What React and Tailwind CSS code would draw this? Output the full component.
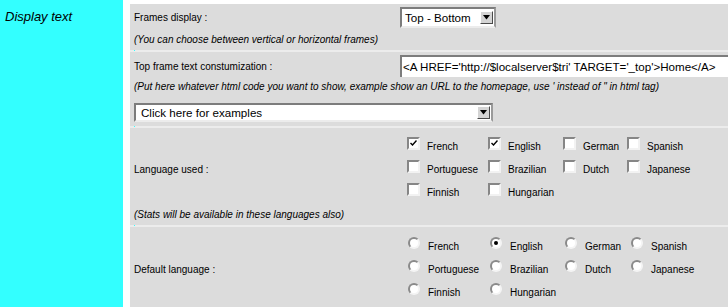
import React from 'react';

const languages = [
  ['French', 'English', 'German', 'Spanish'],
  ['Portuguese', 'Brazilian', 'Dutch', 'Japanese'],
  ['Finnish', 'Hungarian'],
];

const used = ['French', 'English'];

const Arrow = () => (
  <span className="flex h-[13px] w-[13px] shrink-0 items-center justify-center border border-t-white border-l-white border-r-[#4a4a4a] border-b-[#4a4a4a] bg-[#d4d4d4]">
    <svg width="7" height="5" viewBox="0 0 7 5">
      <path d="M0 0 H7 L3.5 4.5 Z" fill="#000" />
    </svg>
  </span>
);

const Separator = () => (
  <div className="h-[2px] bg-[#ececec] pl-[4px]">
    <div className="h-[1px] w-[1px] bg-[#33ffff]" />
  </div>
);

const Checkbox = ({ checked }) => (
  <span className="mb-[7px] flex h-[13px] w-[13px] shrink-0 items-start justify-start border-2 border-t-[#868686] border-l-[#868686] border-r-[#f2f2f2] border-b-[#f2f2f2] bg-white pl-[1px] pt-[1px]">
    {checked && (
      <svg width="7" height="6" viewBox="0 0 7 6">
        <path d="M0.5 3 L2.5 5 L6.5 0.5" stroke="#000" strokeWidth="1.4" fill="none" />
      </svg>
    )}
  </span>
);

const Radio = ({ checked }) => (
  <span className="mb-[7px] flex h-[12px] w-[12px] shrink-0 items-center justify-center rounded-full border-2 border-t-[#8a8a8a] border-l-[#8a8a8a] border-r-[#f4f4f4] border-b-[#f4f4f4] bg-white">
    {checked && <span className="h-[4px] w-[4px] rounded-full bg-black" />}
  </span>
);

const App = () => {
  return (
    <div className="flex h-[307px] overflow-hidden bg-white font-['Liberation_Sans',Arial,sans-serif] text-black">
      <div className="w-[123px] shrink-0 bg-[#33ffff] pl-[5px] pt-[9px]">
        <p className="text-[13px] italic leading-[16px]">Display text</p>
      </div>

      <div className="ml-[7px] mt-[4px] min-w-0 flex-1 bg-[#dcdcdc] text-[10px]">
        {/* frames display */}
        <section className="pl-[4px] pt-[3px] pb-[4px]">
          <div className="flex h-[21px] items-center">
            <span className="w-[266px] shrink-0">Frames display :</span>
            <div className="flex h-[21px] w-[96px] items-center justify-between border-2 border-t-[#7c7c7c] border-l-[#7c7c7c] border-r-[#9a9a9a] border-b-[#ececec] bg-white pl-[3px] pr-[1px] text-[11.6px]">
              <span>Top - Bottom</span>
              <Arrow />
            </div>
          </div>
          <p className="mt-[6px] italic leading-[12px]">(You can choose between vertical or horizontal frames)</p>
        </section>

        <Separator />

        {/* top frame text */}
        <section className="pl-[4px] pt-[3px] pb-[4px]">
          <div className="flex h-[22px] items-center">
            <span className="w-[266px] shrink-0">Top frame text constumization :</span>
            <div className="flex h-[22px] min-w-0 flex-1 items-center overflow-hidden whitespace-nowrap border-t-2 border-l-2 border-t-[#7c7c7c] border-l-[#7c7c7c] bg-white pl-[1px] text-[11.6px]">
              &lt;A HREF='http://$localserver$tri' TARGET='_top'&gt;Home&lt;/A&gt;
            </div>
          </div>
          <p className="mt-[4px] italic leading-[12px]">
            (Put here whatever html code you want to show, example show an URL to the homepage, use ' instead of " in html tag)
          </p>
          <div className="mt-[10px] flex h-[19px] w-[359px] items-center justify-between border-2 border-t-[#7c7c7c] border-l-[#7c7c7c] border-r-[#9a9a9a] border-b-[#ececec] bg-white pl-[5px] pr-[1px] text-[11.6px]">
            <span>Click here for examples</span>
            <Arrow />
          </div>
        </section>

        <Separator />

        {/* language used */}
        <section className="pl-[4px] pt-[7px] pb-[4px]">
          <div className="flex items-center">
            <span className="w-[266px] shrink-0">Language used :</span>
            <div className="pl-[7px]">
              {languages.map((row, i) => (
                <div key={i} className="grid h-[23px] grid-cols-[81px_75px_64px_80px]">
                  {row.map((lang) => (
                    <label key={lang} className="flex items-center gap-[7px]">
                      <Checkbox checked={used.includes(lang)} />
                      <span>{lang}</span>
                    </label>
                  ))}
                </div>
              ))}
            </div>
          </div>
          <p className="mt-[5px] italic leading-[12px]">(Stats will be available in these languages also)</p>
        </section>

        <Separator />

        {/* default language */}
        <section className="pl-[4px] pt-[8px]">
          <div className="flex items-center">
            <span className="w-[266px] shrink-0">Default language :</span>
            <div className="pl-[8px]">
              {languages.map((row, i) => (
                <div key={i} className="grid h-[23px] grid-cols-[82px_75px_66px_80px]">
                  {row.map((lang) => (
                    <label key={lang} className="flex items-center gap-[8px]">
                      <Radio checked={lang === 'English'} />
                      <span>{lang}</span>
                    </label>
                  ))}
                </div>
              ))}
            </div>
          </div>
        </section>
      </div>
    </div>
  );
};

export default App;
